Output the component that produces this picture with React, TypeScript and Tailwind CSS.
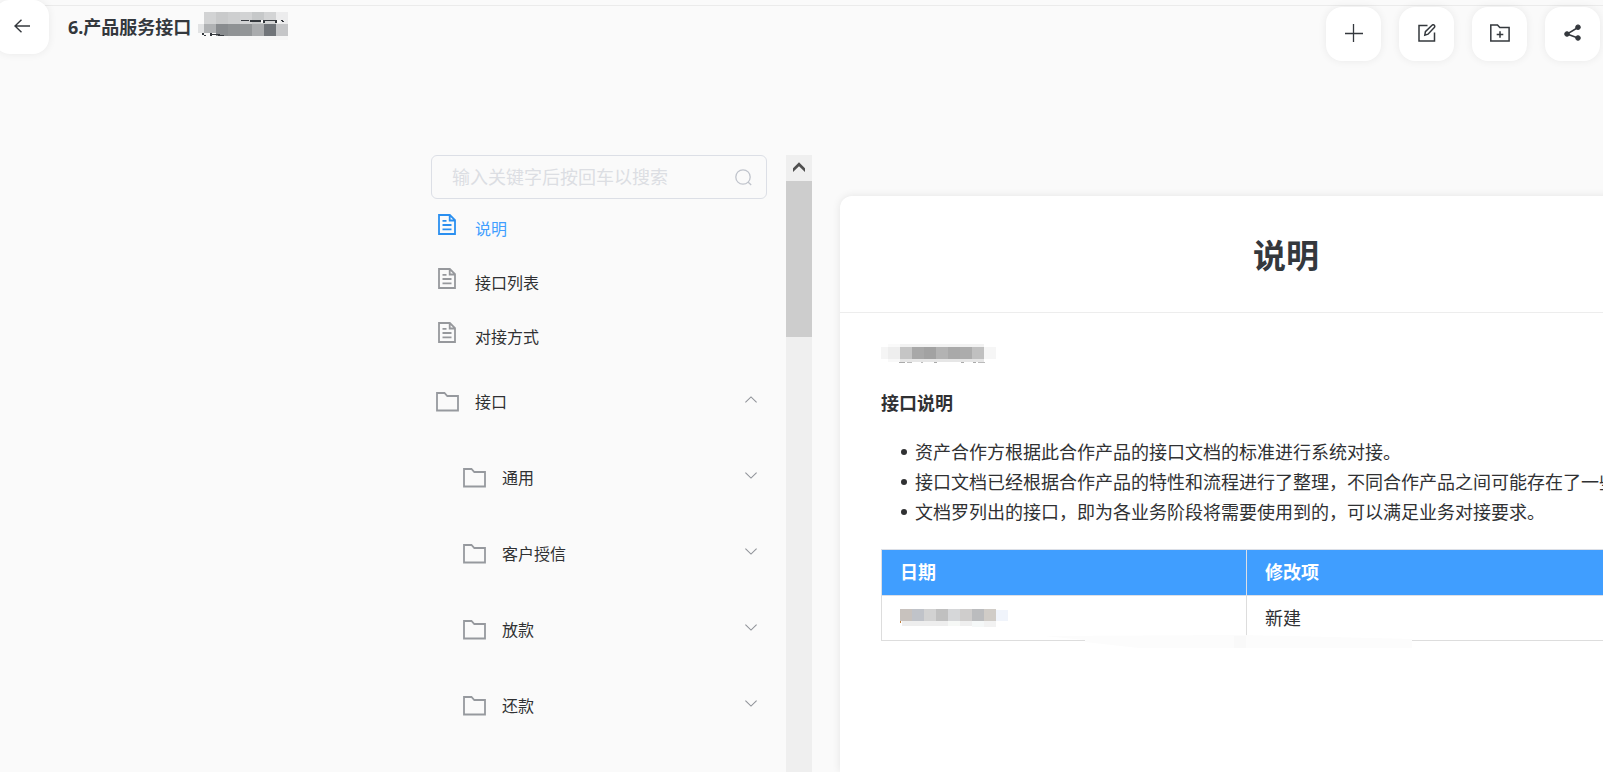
import React from "react";

type Cell = [number, number, number, number, string];

function Mosaic({ w, h, cells, label }: { w: number; h: number; cells: Cell[]; label: string }) {
  return (
    <svg width={w} height={h} viewBox={`0 0 ${w} ${h}`} shapeRendering="crispEdges" role="img" aria-label={label} className="block shrink-0">
      {cells.map(([x, y, cw, ch, fill], i) => (
        <rect key={i} x={x} y={y} width={cw} height={ch} fill={fill} />
      ))}
    </svg>
  );
}

const titleCells: Cell[] = [
  [6, 0, 12, 12, "#d2d3d4"], [18, 0, 12, 12, "#c9cacb"], [30, 0, 12, 12, "#cecfd0"], [42, 0, 12, 12, "#d2d3d4"],
  [54, 0, 12, 12, "#c6c8c9"], [66, 0, 12, 12, "#d3d4d5"], [78, 0, 12, 12, "#ececed"],
  [0, 12, 6, 9, "#e2e3e4"], [6, 12, 12, 12, "#b0b2b4"], [18, 12, 12, 12, "#898c8f"], [30, 12, 12, 12, "#8f9294"],
  [42, 12, 12, 12, "#929597"], [54, 12, 12, 12, "#a9abad"], [66, 12, 12, 12, "#707479"], [78, 12, 12, 12, "#c5c6c8"],
  [43, 8, 8, 1, "#34383d"], [52, 8, 11, 2, "#34383d"], [63, 8, 2, 3, "#fafafa"], [65, 8, 14, 1, "#34383d"],
  [65, 9, 2, 2, "#34383d"], [77, 9, 2, 2, "#34383d"], [79, 8, 3, 3, "#fafafa"], [83, 8, 2, 1, "#34383d"], [84, 9, 2, 1, "#34383d"],
  [6, 21, 12, 3, "#fafafa"], [4, 21, 2, 2, "#34383d"], [6, 23, 2, 1, "#34383d"], [12, 21, 2, 3, "#34383d"],
  [14, 22, 8, 1, "#34383d"], [20, 23, 6, 1, "#34383d"], [30, 24, 60, 4, "#f6f6f6"],
];

const nameCells: Cell[] = [
  [7, 0, 12, 3, "#fafafa"], [19, 0, 84, 3, "#f2f2f2"],
  [0, 3, 7, 12, "#f5f5f5"], [7, 3, 12, 12, "#eeeeee"], [19, 3, 12, 12, "#c5c5c5"], [31, 3, 12, 12, "#a8a8a8"],
  [43, 3, 12, 12, "#a2a2a2"], [55, 3, 12, 12, "#b3b3b3"], [67, 3, 12, 12, "#a9a9a9"], [79, 3, 12, 12, "#acacac"],
  [91, 3, 12, 12, "#c0c0c0"], [103, 3, 12, 12, "#f6f6f6"],
  [7, 15, 12, 3, "#f8f8f8"], [19, 15, 84, 3, "#e6e6e6"],
  [18, 18, 6, 1, "#aaaaaa"], [26, 18, 5, 1, "#bbbbbb"], [40, 18, 2, 1, "#bbbbbb"], [53, 18, 3, 1, "#aaaaaa"],
  [80, 18, 3, 1, "#aaaaaa"], [92, 18, 3, 1, "#aaaaaa"], [97, 18, 7, 1, "#bbbbbb"],
];

const dateCells: Cell[] = [
  [0, 0, 12, 12, "#c8c2be"], [12, 0, 12, 12, "#c0c3c9"], [24, 0, 12, 12, "#d2d2d2"], [36, 0, 12, 12, "#c0c0c0"],
  [48, 0, 12, 12, "#d6d7d9"], [60, 0, 12, 12, "#cfcdcc"], [72, 0, 12, 12, "#bbbcbe"], [84, 0, 12, 12, "#d0ccc7"],
  [96, 1, 12, 11, "#f0f4fb"], [2, 12, 46, 5, "#eeeeee"], [48, 12, 12, 5, "#f6f8f6"], [60, 12, 12, 5, "#efefef"],
  [72, 12, 12, 6, "#f5f8f8"], [84, 12, 12, 6, "#f2f2f2"], [0, 12, 1, 2, "#c08040"],
];

function ArrowLeft() {
  return (
    <svg width="16" height="14" viewBox="0 0 16 14" fill="none" stroke="#34383d" strokeWidth="1.4">
      <path d="M7.5.7 1 7l6.500 6.300M1 7h15" />
    </svg>
  );
}
function PlusIcon() {
  return (
    <svg width="18" height="18" viewBox="0 0 18 18" fill="none" stroke="#34383d" strokeWidth="1.3">
      <path d="M8.500 0v18M0 9.500h18" />
    </svg>
  );
}
function EditIcon() {
  return (
    <svg width="18" height="18" viewBox="0 0 18 18" fill="none" stroke="#34383d" strokeWidth="1.5">
      <path d="M9.500 1.500H1v15.500h15.500V8.500" />
      <path d="m6.800 11.200.6-3.600 6.600-6.400a1.600 1.600 0 0 1 2.300 2.300L10 10.200z" />
    </svg>
  );
}
function FolderAddIcon() {
  return (
    <svg width="20" height="18" viewBox="0 0 20 18" fill="none" stroke="#34383d" strokeWidth="1.500">
      <path d="M.8 16.900V1h6.700l2.300 2.600h9.300v13.300zM10 7.200v6.600M6.700 10.500h6.600" />
    </svg>
  );
}
function ShareIcon() {
  return (
    <svg width="17" height="18" viewBox="0 0 17 18" fill="#34383d" stroke="#34383d">
      <path d="M14 3.500 3 10l11 4" fill="none" strokeWidth="1.500" />
      <circle cx="14" cy="3.200" r="2.300" />
      <circle cx="3" cy="10" r="2.300" />
      <circle cx="14" cy="14" r="2.300" />
    </svg>
  );
}
function SearchIcon() {
  return (
    <svg width="17" height="17" viewBox="0 0 17 17" fill="none" stroke="#c0c4cc" strokeWidth="1.300">
      <circle cx="8" cy="8" r="7.200" />
      <path d="m13 13 3.200 3" />
    </svg>
  );
}
function DocIcon({ active }: { active?: boolean }) {
  return (
    <svg width="18" height="21" viewBox="0 0 18 21" fill="none" stroke={active ? "#2a8ff0" : "#96989c"} strokeWidth="1.800">
      <path d="M1 1h10.800l5.200 5.200V20H1zM11.700 1v5.500H17" />
      <path d="M4.500 6.900h4M4.500 11h9M4.500 15.300h9" />
    </svg>
  );
}
function FolderIcon() {
  return (
    <svg width="23" height="20" viewBox="0 0 23 20" fill="none" stroke="#96999e" strokeWidth="1.800">
      <path d="M1 18.500V1h7.500l2.800 3H22v14.500z" />
    </svg>
  );
}
function Chevron({ up }: { up?: boolean }) {
  return (
    <svg width="12" height="7" viewBox="0 0 12 7" fill="none" stroke="#909399" strokeWidth="1.100">
      <path d={up ? "M.4 6.400 6 .9l5.600 5.500" : "M.4.6 6 6.100 11.600.6"} />
    </svg>
  );
}

const tools = [
  { name: "新增", icon: <PlusIcon /> },
  { name: "编辑", icon: <EditIcon /> },
  { name: "新建文件夹", icon: <FolderAddIcon /> },
  { name: "分享", icon: <ShareIcon /> },
];
const docs = ["说明", "接口列表", "对接方式"];
const folders = ["通用", "客户授信", "放款", "还款"];
const notes = [
  "资产合作方根据此合作产品的接口文档的标准进行系统对接。",
  "接口文档已经根据合作产品的特性和流程进行了整理，不同合作产品之间可能存在了一些",
  "文档罗列出的接口，即为各业务阶段将需要使用到的，可以满足业务对接要求。",
];

export default function App() {
  return (
    <div className="flex h-screen flex-col overflow-hidden bg-[#fafafa] font-['Noto_Sans','Noto_Sans_CJK_SC',sans-serif] text-[#303133]">
      <header className="relative flex h-[155px] shrink-0 items-start justify-between pr-[3px]">
        <div className="absolute inset-x-0 top-[5px] h-px bg-[#ebebeb]" />
        <div className="relative flex items-start">
          <button aria-label="返回" className="-ml-[6px] flex h-[54px] w-[55px] items-center justify-center rounded-2xl bg-white pb-[2px] shadow-[0_0_8px_rgba(0,0,0,0.07)]">
            <ArrowLeft />
          </button>
          <h1 className="ml-[19px] mt-[13px] text-[18px] font-bold leading-[28px] text-[#34383d]">6.产品服务接口</h1>
          <div className="ml-[7px] mt-3">
            <Mosaic w={90} h={28} cells={titleCells} label="已遮盖" />
          </div>
        </div>
        <div className="relative mt-[7px] flex gap-[18px]">
          {tools.map((t) => (
            <button key={t.name} aria-label={t.name} className="flex h-[54px] w-[55px] items-center justify-center rounded-2xl bg-white pb-[2px] shadow-[0_0_8px_rgba(0,0,0,0.07)]">
              {t.icon}
            </button>
          ))}
        </div>
      </header>

      <div className="flex min-h-0 flex-1">
        <aside className="ml-[431px] w-[336px] shrink-0">
          <label className="flex h-[44px] items-center rounded-md border border-[#dcdfe6] pl-5 pr-[14px]">
            <input aria-label="搜索" placeholder="输入关键字后按回车以搜索" className="min-w-0 flex-1 bg-transparent text-[18px] outline-none placeholder:text-[#dcdee3]" />
            <SearchIcon />
          </label>
          <nav className="pt-[3px] text-[16px]">
            {docs.map((d, i) => (
              <a key={d} href="#" className="flex h-[54px] items-center pl-[7px]">
                <span className="pb-[10px]">
                  <DocIcon active={i === 0} />
                </span>
                <span className={i === 0 ? "ml-[19px] text-[#409eff]" : "ml-[19px]"}>{d}</span>
              </a>
            ))}
            <button className="flex h-[76px] w-full items-center pl-[5px] pr-[10px]">
              <FolderIcon />
              <span className="ml-4 flex-1 text-left">接口</span>
              <span className="pb-[5px]"><Chevron up /></span>
            </button>
            {folders.map((f) => (
              <button key={f} className="flex h-[76px] w-full items-center pl-8 pr-[10px]">
                <FolderIcon />
                <span className="ml-4 flex-1 text-left">{f}</span>
                <span className="pb-[5px]"><Chevron /></span>
              </button>
            ))}
          </nav>
        </aside>

        <div className="ml-[19px] w-[26px] shrink-0 bg-[#efefef]">
          <div className="flex h-[26px] items-center justify-center pb-[2px]">
            <svg width="12" height="10" viewBox="0 0 12 10" fill="#505050">
              <path d="M0 6.300 6 .3l6 6v3.600L6 4.300 0 9.900z" />
            </svg>
          </div>
          <div className="h-[156px] bg-[#cdcdcd]" />
        </div>

        <main className="ml-7 min-w-[892px] flex-1 pt-[41px]">
          <article className="h-full rounded-t-xl bg-white shadow-[0_0_8px_rgba(0,0,0,0.09)]">
            <div className="flex h-[117px] items-center justify-center border-b border-[#ededed] pt-1">
              <h2 className="text-[33px] font-bold leading-[48px] text-[#34383d]">说明</h2>
            </div>
            <div className="px-[41px] pt-[31px] text-[18px]">
              <Mosaic w={115} h={19} cells={nameCells} label="已遮盖" />
              <h3 className="mt-[26px] font-bold leading-[28px]">接口说明</h3>
              <ul className="mt-5 whitespace-nowrap pl-5 leading-[30px]">
                {notes.map((n) => (
                  <li key={n} className="flex items-center gap-2 before:size-[6px] before:rounded-full before:bg-[#303133]">
                    {n}
                  </li>
                ))}
              </ul>
              <div className="relative mt-[22px]">
                <table className="w-full table-fixed border-collapse text-left">
                  <thead>
                    <tr className="h-[46px] bg-[#409eff] text-white">
                      <th className="w-[365px] border border-[#dcdfe6] px-[18px] font-bold">日期</th>
                      <th className="border border-[#dcdfe6] px-[18px] font-bold">修改项</th>
                    </tr>
                  </thead>
                  <tbody>
                    <tr className="h-[45px]">
                      <td className="border border-[#dddddd] px-[18px]">
                        <Mosaic w={108} h={18} cells={dateCells} label="已遮盖" />
                      </td>
                      <td className="border border-[#dddddd] px-[18px]">新建</td>
                    </tr>
                  </tbody>
                </table>
                <svg aria-hidden="true" width="368" height="13" viewBox="0 0 368 13" className="absolute -bottom-[7px] left-[163px]">
                  <path d="M0 1 200 0l168 4v9H95L41 7V5z" fill="#fcfcfc" />
                  <path d="M190 1h12v12h-12z" fill="#f9f9f9" />
                </svg>
              </div>
            </div>
          </article>
        </main>
      </div>
    </div>
  );
}
